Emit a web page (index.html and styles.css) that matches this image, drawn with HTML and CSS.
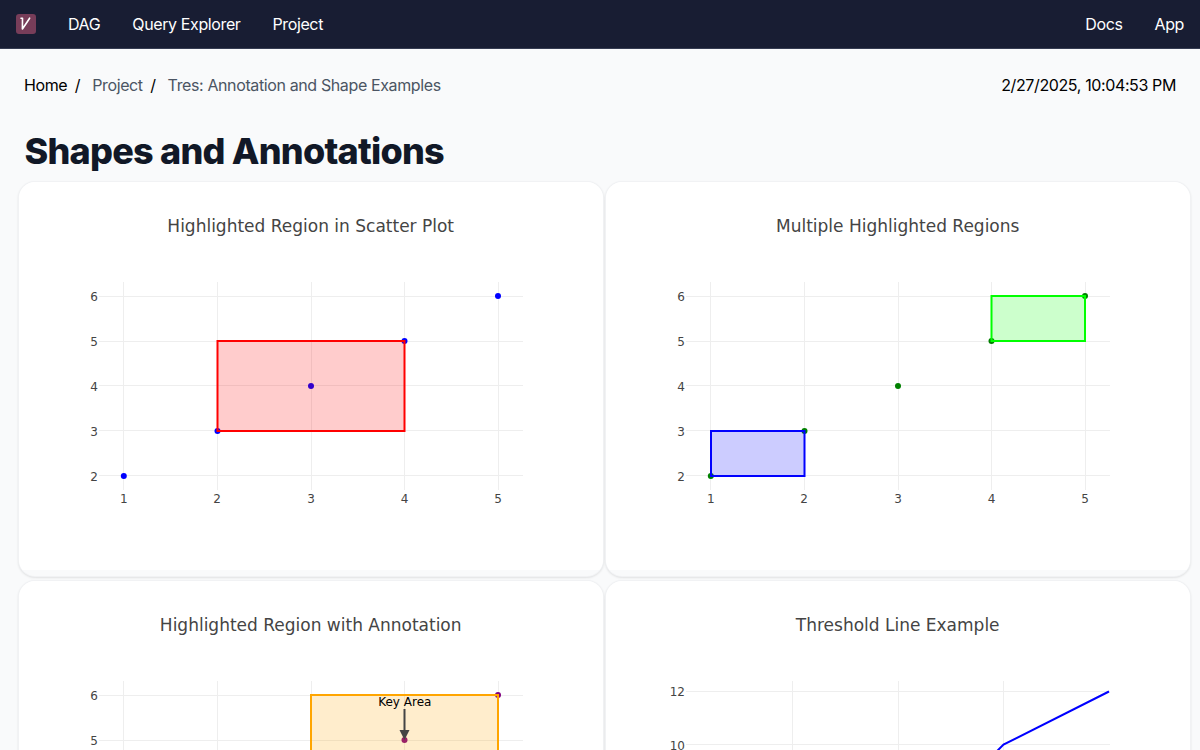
FILE: index.html
```html
<!DOCTYPE html>
<html lang="en">
<head>
<meta charset="utf-8">
<title>Shapes and Annotations</title>
<link rel="stylesheet" href="styles.css">
</head>
<body>
<nav class="navbar">
  <div class="nav-group">
    <svg class="logo" viewBox="0 0 20 20"><rect width="20" height="20" rx="3" fill="#773d59"/><path d="M5 4.200L6.500 4.200L6.400 15Q9.500 10.500 13.600 4.200" fill="none" stroke="#fff" stroke-width="1.600" stroke-linecap="round" stroke-linejoin="round"/></svg>
    <a>DAG</a><a>Query Explorer</a><a>Project</a>
  </div>
  <div class="nav-group"><a>Docs</a><a>App</a></div>
</nav>
<div class="topline">
  <div class="crumbs"><span>Home</span><span class="sep">/</span><span class="muted">Project</span><span class="sep">/</span><span class="muted">Tres: Annotation and Shape Examples</span></div>
  <time>2/27/2025, 10:04:53 PM</time>
</div>
<h1 class="title">Shapes and Annotations</h1>
<main class="grid">
  <section class="card">
    <svg class="plot" viewBox="0 0 585 388">
      <text class="heading" x="291.700" y="50">Highlighted Region in Scatter Plot</text>
      <path class="lines" d="M104.500 100V308M198.500 100V308M292.500 100V308M385.500 100V308M479.500 100V308M80 114.500H504M80 159.500H504M80 203.500H504M80 248.500H504M80 293.500H504"/>
      <g fill="#00f"><circle cx="104.800" cy="294" r="3"/><circle cx="198.500" cy="249" r="3"/><circle cx="292" cy="204" r="3"/><circle cx="385.500" cy="159" r="3"/><circle cx="479" cy="114" r="3"/></g>
      <rect x="198.500" y="159" width="187" height="90" fill="#f00" fill-opacity=".2" stroke="#f00" stroke-width="2"/>
      <g class="ytick"><text x="79" y="119">6</text><text x="79" y="164">5</text><text x="79" y="208.500">4</text><text x="79" y="253.500">3</text><text x="79" y="298.500">2</text></g>
      <g class="xtick"><text x="104.800" y="321">1</text><text x="198" y="321">2</text><text x="292" y="321">3</text><text x="385.500" y="321">4</text><text x="479" y="321">5</text></g>
    </svg>
  </section>
  <section class="card">
    <svg class="plot" viewBox="0 0 585 388">
      <text class="heading" x="291.700" y="50">Multiple Highlighted Regions</text>
      <path class="lines" d="M104.500 100V308M198.500 100V308M292.500 100V308M385.500 100V308M479.500 100V308M80 114.500H504M80 159.500H504M80 203.500H504M80 248.500H504M80 293.500H504"/>
      <g fill="#008000"><circle cx="104.800" cy="294" r="3"/><circle cx="198.500" cy="249" r="3"/><circle cx="292" cy="204" r="3"/><circle cx="385.500" cy="159" r="3"/><circle cx="479" cy="114" r="3"/></g>
      <rect x="105" y="249" width="93.500" height="45" fill="#00f" fill-opacity=".2" stroke="#00f" stroke-width="2"/>
      <rect x="385.500" y="114" width="93.500" height="45" fill="#0f0" fill-opacity=".2" stroke="#0f0" stroke-width="2"/>
      <g class="ytick"><text x="79" y="119">6</text><text x="79" y="164">5</text><text x="79" y="208.500">4</text><text x="79" y="253.500">3</text><text x="79" y="298.500">2</text></g>
      <g class="xtick"><text x="104.800" y="321">1</text><text x="198" y="321">2</text><text x="292" y="321">3</text><text x="385.500" y="321">4</text><text x="479" y="321">5</text></g>
    </svg>
  </section>
  <section class="card">
    <svg class="plot" viewBox="0 0 585 388">
      <text class="heading" x="291.700" y="50">Highlighted Region with Annotation</text>
      <path class="lines" d="M104.500 100V308M198.500 100V308M292.500 100V308M385.500 100V308M479.500 100V308M80 114.500H504M80 159.500H504"/>
      <g fill="#800080"><circle cx="385.500" cy="159" r="3"/><circle cx="479" cy="114" r="3"/></g>
      <rect x="292" y="114" width="187" height="90" fill="#ffa500" fill-opacity=".2" stroke="#ffa500" stroke-width="2"/>
      <path d="M385.500 128V151" stroke="#444" stroke-width="2"/><path d="M380.500 149H390.500L385.500 159Z" fill="#444"/>
      <text class="note" x="385.800" y="125">Key Area</text>
      <g class="ytick"><text x="79" y="119">6</text><text x="79" y="164">5</text></g>
    </svg>
  </section>
  <section class="card">
    <svg class="plot" viewBox="0 0 585 388">
      <text class="heading" x="291.700" y="50">Threshold Line Example</text>
      <path class="lines" d="M186.500 100V308M292.500 100V308M397.500 100V308M80 110.500H504M80 163.500H504"/>
      <path d="M291.500 270L397.500 163.600L503 110.500" fill="none" stroke="#00f" stroke-width="2"/>
      <g class="ytick"><text x="79" y="115">12</text><text x="79" y="168.500">10</text></g>
    </svg>
  </section>
</main>
</body>
</html>
```
FILE: styles.css
```css
* { box-sizing: border-box; }
html { overflow: hidden; }
body { margin: 0; height: 750px; overflow: hidden; background: #f9fafb; color: #000; font: 16px/24px Inter, sans-serif; letter-spacing: -0.38px; }
.navbar { display: flex; justify-content: space-between; align-items: center; height: 49px; padding: 0 16px; background: #181d33; border-bottom: 1px solid #353c52; color: #fff; }
.nav-group { display: flex; align-items: center; gap: 32px; }
.logo { display: block; width: 20px; height: 20px; }
.topline { display: flex; justify-content: space-between; padding: 24px 24px 0; }
.crumbs { display: flex; }
.sep { margin: 0 12px 0 7.5px; }
.muted { color: #4b5563; }
.title { margin: 34px 0 0 24.5px; height: 51px; font-size: 36px; line-height: 40px; font-weight: 800; letter-spacing: -0.77px; color: #111827; }
.grid { display: grid; grid-template-columns: 584px 584px; grid-auto-rows: 394px; gap: 5px 3px; padding-left: 19px; }
.card { overflow: hidden; border-radius: 16px; background: #f9fafb; box-shadow: 0 0 0 1px #f1f2f4, 0 1px 3px rgba(0, 0, 0, .2); }
.plot { display: block; width: 585px; height: 388px; background: #fff; font-family: "DejaVu Sans", sans-serif; letter-spacing: 0; }
.heading { font-size: 17px; fill: #444; text-anchor: middle; }
.lines { fill: none; stroke: #eee; stroke-width: 1; }
.ytick { font-size: 12px; fill: #444; text-anchor: end; }
.xtick { font-size: 12px; fill: #444; text-anchor: middle; }
.note { font-size: 12px; fill: #000; text-anchor: middle; }
```
